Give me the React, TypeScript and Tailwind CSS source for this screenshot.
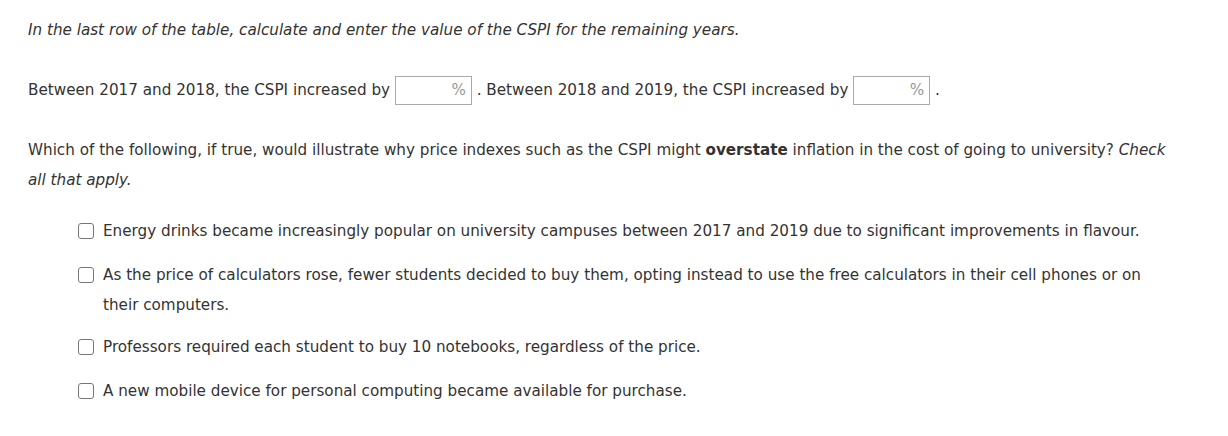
import React from 'react';

const PctInput = () => (
  <span className="inline-flex items-center justify-end w-[77px] h-[29px] border border-[#a9a9a9] bg-white pr-[5px] align-middle">
    <span className="text-[#999] leading-none">%</span>
  </span>
);

const Option = ({ children, className = '' }: { children: React.ReactNode; className?: string }) => (
  <label className={`flex items-start gap-[9px] ${className}`}>
    <span className="mt-[7px] shrink-0 w-[16px] h-[16px] rounded-[3px] border border-[#767676] bg-white" />
    <span>{children}</span>
  </label>
);

export default function App() {
  return (
    <div className="w-[1228px] h-[436px] bg-white text-[#333] text-[15.2px] leading-[30px] font-['DejaVu_Sans',Verdana,sans-serif] pl-[28px] pr-[62px] pt-[15px]">
      <p className="italic">
        In the last row of the table, calculate and enter the value of the CSPI for the remaining years.
      </p>
      <p className="mt-[30px]">
        Between 2017 and 2018, the CSPI increased by <PctInput /> . Between 2018 and 2019, the CSPI increased by{' '}
        <PctInput /> .
      </p>
      <p className="mt-[30px]">
        Which of the following, if true, would illustrate why price indexes such as the CSPI might{' '}
        <b>overstate</b> inflation in the cost of going to university? <i>Check all that apply.</i>
      </p>
      <div className="mt-[21px] ml-[50px] flex flex-col gap-[14px]">
        <Option>
          Energy drinks became increasingly popular on university campuses between 2017 and 2019 due to significant improvements in flavour.
        </Option>
        <Option>
          As the price of calculators rose, fewer students decided to buy them, opting instead to use the free calculators in their cell phones or on their computers.
        </Option>
        <Option className="-mt-[2px]">Professors required each student to buy 10 notebooks, regardless of the price.</Option>
        <Option>A new mobile device for personal computing became available for purchase.</Option>
      </div>
    </div>
  );
}
